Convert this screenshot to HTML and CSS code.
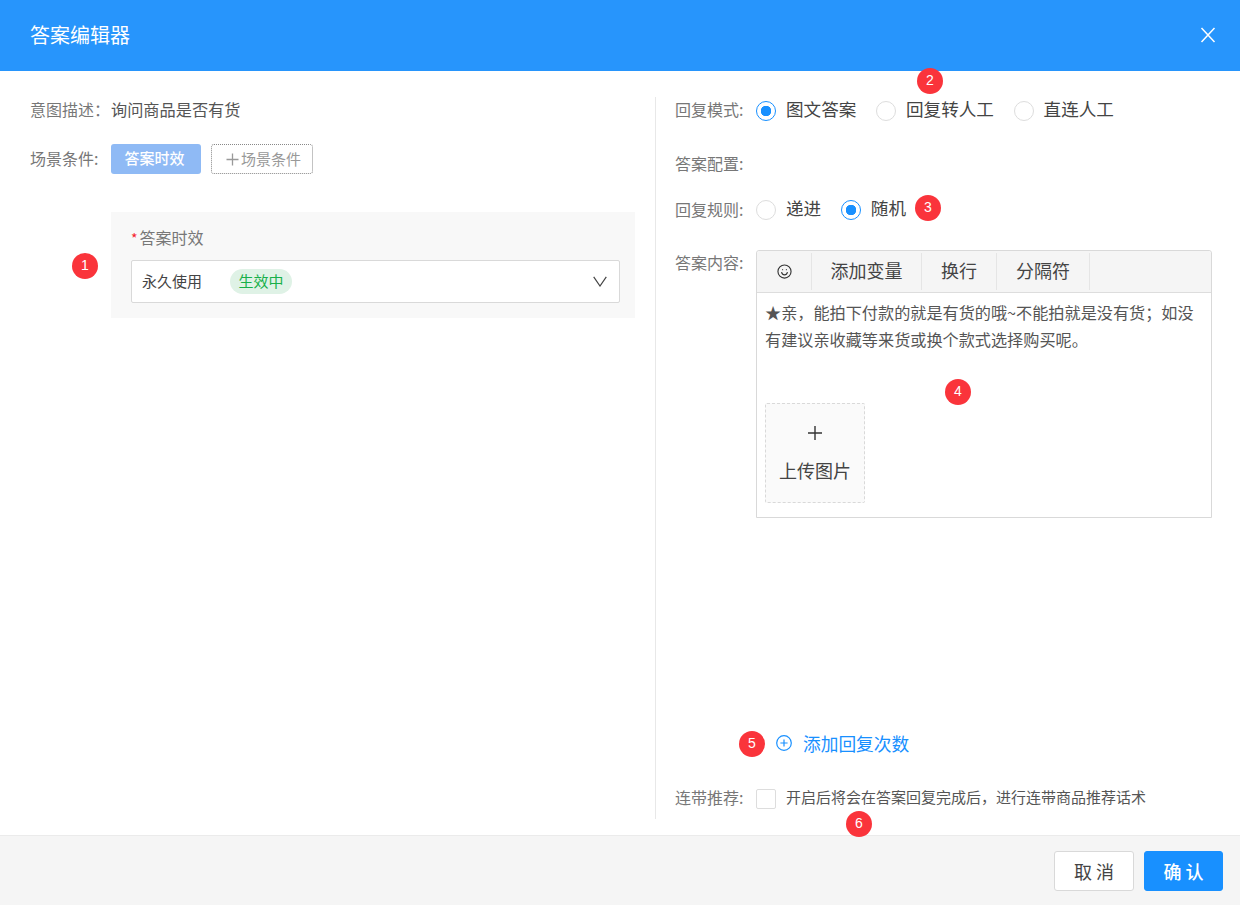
FILE: index.html
```html
<!DOCTYPE html>
<html lang="zh-CN">
<head>
<meta charset="utf-8">
<title>答案编辑器</title>
<link rel="stylesheet" href="styles.css">
</head>
<body>
<div class="dialog">
  <header class="head">
    <span class="title">答案编辑器</span>
    <svg class="close" width="16" height="16" viewBox="0 0 16 16"><path d="M1.500 1 14.500 15M14.500 1 1.500 15" stroke="#fff" stroke-width="1.500" fill="none"/></svg>
  </header>
  <main class="main">
    <section class="left">
      <div class="row row-desc"><span class="label-l">意图描述：</span><span class="value">询问商品是否有货</span></div>
      <div class="row row-scene">
        <span class="label-l label-scene">场景条件:</span>
        <span class="tag">答案时效</span>
        <span class="add-tag"><svg width="13" height="13" viewBox="0 0 13 13"><path d="M6.500 0.500V12.500M0.500 6.500H12.500" stroke="#999" stroke-width="1.300"/></svg>场景条件</span>
      </div>
      <div class="panel">
        <div class="panel-label"><span class="star">*</span>答案时效</div>
        <div class="select">
          <span class="select-text">永久使用</span>
          <span class="status">生效中</span>
          <svg class="chev" width="14" height="11" viewBox="0 0 14 11"><path d="M0.700 0.800 7 10 13.300 0.800" stroke="#444" stroke-width="1.200" fill="none"/></svg>
        </div>
      </div>
    </section>
    <section class="right">
      <div class="line line-mode">
        <span class="label-r">回复模式:</span>
        <label class="radio on"><i></i>图文答案</label>
        <label class="radio"><i></i>回复转人工</label>
        <label class="radio"><i></i>直连人工</label>
      </div>
      <div class="line line-config"><span class="label-r">答案配置:</span></div>
      <div class="line line-rule">
        <span class="label-r label-rule">回复规则:</span>
        <label class="radio"><i></i>递进</label>
        <label class="radio on"><i></i>随机</label>
      </div>
      <div class="line line-content">
        <span class="label-r label-top">答案内容:</span>
        <div class="editor">
          <div class="toolbar">
            <span class="tool tool-emoji"><svg width="15" height="15" viewBox="0 0 16 16" fill="none" stroke="#333" stroke-width="1.200"><circle cx="8" cy="8" r="7"/><path d="M4.800 8.600c.6 2 1.700 3 3.200 3s2.600-1 3.200-3"/><path d="M5.600 6h.9M9.500 6h.9" stroke-width="1.400"/></svg></span>
            <span class="tool tool-text tool-var">添加变量</span>
            <span class="tool tool-text tool-br">换行</span>
            <span class="tool tool-text tool-sep">分隔符</span>
          </div>
          <div class="editor-body">
            <p class="answer">★亲，能拍下付款的就是有货的哦~不能拍就是没有货；如没有建议亲收藏等来货或换个款式选择购买呢。</p>
            <div class="upload">
              <svg width="14" height="14" viewBox="0 0 14 14"><path d="M7 0V14M0 7H14" stroke="#333" stroke-width="1.400"/></svg>
              <span class="upload-text">上传图片</span>
            </div>
          </div>
        </div>
      </div>
      <div class="add-times">
        <svg width="16" height="16" viewBox="0 0 16 16" fill="none" stroke="#1890ff" stroke-width="1.200"><circle cx="8" cy="8" r="7.300"/><path d="M8 4.400v7.200M4.400 8h7.200"/></svg>
        <span>添加回复次数</span>
      </div>
      <div class="line line-rec">
        <span class="label-r">连带推荐:</span>
        <span class="check"></span>
        <span class="rec-text">开启后将会在答案回复完成后，进行连带商品推荐话术</span>
      </div>
    </section>
  </main>
  <footer class="foot">
    <button class="btn btn-cancel">取消</button>
    <button class="btn btn-ok">确认</button>
  </footer>
  <span class="pin pin-1">1</span>
  <span class="pin pin-2">2</span>
  <span class="pin pin-3">3</span>
  <span class="pin pin-4">4</span>
  <span class="pin pin-5">5</span>
  <span class="pin pin-6">6</span>
</div>
</body>
</html>
```

FILE: styles.css
```css
* { box-sizing: border-box; }
html, body { margin: 0; padding: 0; }
body {
  font-family: "Noto Sans CJK SC", "Noto Sans", sans-serif;
  font-size: 16px;
  color: #333;
  background: #fff;
}
.dialog {
  position: relative;
  width: 1240px;
  height: 905px;
  display: flex;
  flex-direction: column;
  overflow: hidden;
}
.head {
  height: 71px;
  flex: none;
  background: #2795fc;
  display: flex;
  align-items: center;
  justify-content: space-between;
  padding: 0 24px 2px 30px;
  color: #fff;
}
.title { font-size: 20px; line-height: 28px; }
.main {
  flex: 1;
  display: flex;
  padding-top: 25px;
  padding-bottom: 16px;
}
.left {
  width: 656px;
  flex: none;
  border-right: 1px solid #e8e8e8;
  margin-top: 1px;
  padding-left: 30px;
  padding-right: 20px;
}
.right { flex: 1; padding-left: 19px; padding-right: 28px; display: flex; flex-direction: column; }
.row { display: flex; align-items: center; }
.row-desc { height: 26px; line-height: 26px; margin-top: -1px; }
.label-l { width: 81px; flex: none; color: #777; }
.label-scene { margin-top: -3px; }
.value { color: #555; font-size: 16.200px; }
.row-scene { margin-top: 22px; height: 30px; line-height: 28px; }
.tag {
  width: 90px;
  height: 30px;
  line-height: 27px;
  text-align: center;
  background: #8fbaf5;
  border-radius: 3px;
  color: #fff;
  font-size: 15px;
  font-weight: 500;
  padding-right: 3px;
}
.add-tag {
  margin-left: 10px;
  width: 102px;
  height: 30px;
  border: 1px dotted #888;
  border-radius: 3px;
  color: #999;
  font-size: 15px;
  display: flex;
  align-items: center;
  justify-content: center;
  gap: 2px;
  padding-left: 3px;
}
.panel {
  margin-top: 38px;
  margin-left: 81px;
  height: 106px;
  background: #f8f8f8;
  padding: 13px 15px 0 20px;
}
.panel-label { height: 24px; line-height: 24px; color: #777; margin-bottom: 11px; }
.star { color: #f5222d; font-size: 14px; margin-right: 2px; }
.select {
  height: 43px;
  background: #fff;
  border: 1px solid #d9d9d9;
  border-radius: 2px;
  display: flex;
  align-items: center;
  padding: 0 12px 0 10px;
  font-size: 15px;
}
.select-text { color: #444; width: 88px; line-height: 24px; margin-top: -2px; }
.status {
  width: 62px;
  height: 25px;
  line-height: 24px;
  text-align: center;
  border-radius: 13px;
  background: #dff2e6;
  color: #18b04a;
}
.chev { margin-left: auto; }
.line { display: flex; align-items: center; }
.label-r { width: 81px; flex: none; color: #777; line-height: 26px; }
.label-rule { margin-top: 2px; }
.line-mode { height: 26px; }
.line-config { height: 26px; margin-top: 28px; }
.line-rule { height: 26px; margin-top: 19px; }
.line-content { margin-top: 29px; align-items: flex-start; }
.label-top { margin-top: -1px; }
.radio {
  display: flex;
  align-items: center;
  font-size: 17.600px;
  line-height: 26px;
  color: #444;
  margin-right: 19.600px;
}
.radio i {
  width: 20px;
  height: 20px;
  border: 1px solid #ddd;
  border-radius: 50%;
  margin-right: 10px;
  margin-top: 4px;
  background: #fff;
  flex: none;
}
.radio.on i {
  border-color: #1890ff;
  background: radial-gradient(circle, #1890ff 0 5px, #fff 5.500px);
}
.editor {
  width: 456px;
  height: 268px;
  border: 1px solid #d9d9d9;
  border-radius: 3px 3px 0 0;
}
.toolbar {
  height: 42px;
  background: #f5f5f5;
  border-bottom: 1px solid #ddd;
  display: flex;
  font-size: 18px;
  color: #444;
  border-radius: 3px 3px 0 0;
}
.tool {
  display: flex;
  align-items: center;
  justify-content: center;
  border-right: 1px solid #e5e5e5;
  margin: 2px 0;
}
.tool-text { padding-bottom: 4px; }
.tool-emoji { width: 55px; padding-left: 1px; }
.tool-var { width: 110px; }
.tool-br { width: 75px; }
.tool-sep { width: 93px; }
.editor-body { padding: 6px 8px 0; }
.answer { margin: 0; line-height: 27px; color: #555; width: 440px; height: 104px; font-size: 16.150px; }
.upload {
  width: 100px;
  height: 100px;
  background: #fafafa;
  border: 1px dashed #d9d9d9;
  border-radius: 2px;
  display: flex;
  flex-direction: column;
  align-items: center;
  font-size: 18px;
  color: #444;
  padding-top: 22px;
}
.upload-text { margin-top: 17px; line-height: 26px; }
.add-times {
  margin-top: 212px;
  margin-left: 101px;
  display: flex;
  align-items: center;
  gap: 11px;
  font-size: 17.700px;
  line-height: 26px;
  color: #1890ff;
  height: 26px;
}
.line-rec { margin-top: 30px; height: 26px; }
.line-rec .label-r, .rec-text { margin-bottom: 5px; }
.check {
  width: 20px;
  height: 20px;
  border: 1px solid #ddd;
  border-radius: 2px;
  flex: none;
  margin-right: 10px;
}
.rec-text { font-size: 15px; color: #555; }
.foot {
  height: 70px;
  flex: none;
  background: #f5f5f5;
  border-top: 1px solid #ebebeb;
  display: flex;
  justify-content: flex-end;
  align-items: center;
  gap: 10px;
  padding-right: 17px;
}
.btn {
  width: 80px;
  height: 40px;
  font: inherit;
  font-size: 18px;
  letter-spacing: 4px;
  border-radius: 3px;
  padding: 0 0 0 4px;
}
.btn-cancel { background: #fff; border: 1px solid #d9d9d9; color: #444; }
.btn-ok { background: #1890ff; border: 1px solid #1890ff; color: #fff; width: 79px; font-weight: 500; }
.pin {
  position: absolute;
  width: 26px;
  height: 26px;
  border-radius: 50%;
  background: #fa343b;
  color: #fff;
  font-family: "Liberation Sans", sans-serif;
  font-size: 14px;
  line-height: 24px;
  text-align: center;
}
.pin-1 { left: 72px; top: 253px; }
.pin-2 { left: 917px; top: 68px; }
.pin-3 { left: 915px; top: 195px; }
.pin-4 { left: 945px; top: 379px; }
.pin-5 { left: 739px; top: 731px; }
.pin-6 { left: 846px; top: 811px; }
```
